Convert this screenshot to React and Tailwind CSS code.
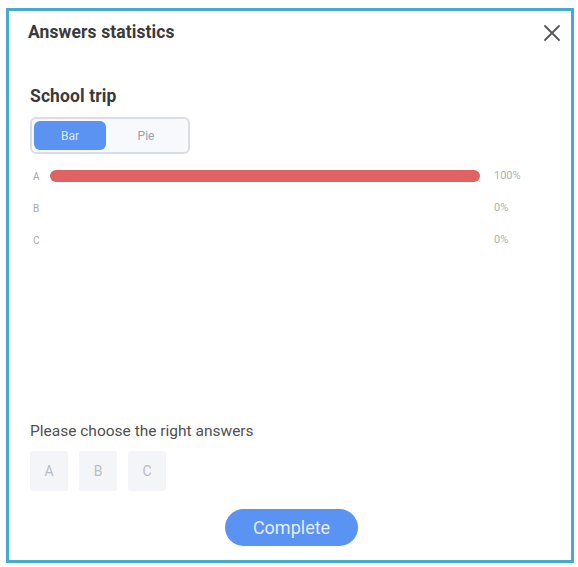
import React from "react";

const rows = [
  { label: "A", value: 100 },
  { label: "B", value: 0 },
  { label: "C", value: 0 },
];

export default function App() {
  return (
    <div className="w-[578px] h-[567px] bg-white pl-[6px] pt-[8px]" style={{ fontFamily: "Roboto, 'Noto Sans', sans-serif" }}>
      <div className="w-[568px] h-[555px] border-[3px] border-[#45abcf] bg-white flex flex-col">
        {/* header */}
        <div className="flex items-center justify-between pl-[19px] pr-[10px] pt-[5px] h-[38px]">
          <span className="text-[17.5px] font-bold text-[#3a3a3a] tracking-[0.1px]">Answers statistics</span>
          <svg width="18" height="18" viewBox="0 0 18 18" className="text-[#555]">
            <path d="M2 2 L16 16 M16 2 L2 16" stroke="currentColor" strokeWidth="1.8" strokeLinecap="round" />
          </svg>
        </div>

        <div className="pl-[21px] pt-[37px]">
          <div className="text-[17.5px] font-bold text-[#3a3a3a] leading-[20px] tracking-[0.1px]">School trip</div>

          {/* Bar / Pie toggle */}
          <div className="mt-[11px] w-[160px] h-[37px] rounded-[6px] border-2 border-[#d9dee6] bg-[#f7f9fc] flex items-center p-[2px]">
            <div className="w-[72px] h-[29px] rounded-[6px] bg-[#5b93f2] flex items-center justify-center text-[12px] text-[#dbe7fb]">Bar</div>
            <div className="flex-1 flex items-center justify-center text-[12px] text-[#9aa3ad]">Pie</div>
          </div>

          {/* bar chart */}
          <div className="mt-[16px] flex flex-col gap-[20px] w-[530px]">
            {rows.map((r) => (
              <div key={r.label} className="flex items-center h-[12px]">
                <span className="w-[20px] pl-[3px] text-[10px] text-[#a5a5a5]">{r.label}</span>
                <div className="w-[430px] h-[12px]">
                  <div className="h-full rounded-full bg-[#e06363]" style={{ width: `${r.value}%` }} />
                </div>
                <span className="ml-[14px] text-[11px] text-[#b0b0b0]">{r.value}%</span>
              </div>
            ))}
          </div>
        </div>

        <div className="flex-1" />

        <div className="pl-[21px]">
          <div className="text-[15.5px] text-[#505050] leading-[18px]">Please choose the right answers</div>
          <div className="mt-[11px] flex gap-[11px]">
            {["A", "B", "C"].map((l) => (
              <div key={l} className="w-[38px] h-[40px] rounded-[3px] bg-[#f3f5f8] flex items-center justify-center text-[14px] text-[#b9bdc3]">{l}</div>
            ))}
          </div>
        </div>

        <div className="flex justify-center pt-[18px] pb-[14px] pl-[3px]">
          <button className="w-[133px] h-[37px] rounded-full bg-[#5b93f2] text-[18px] text-[#e3edfd]">Complete</button>
        </div>
      </div>
    </div>
  );
}
